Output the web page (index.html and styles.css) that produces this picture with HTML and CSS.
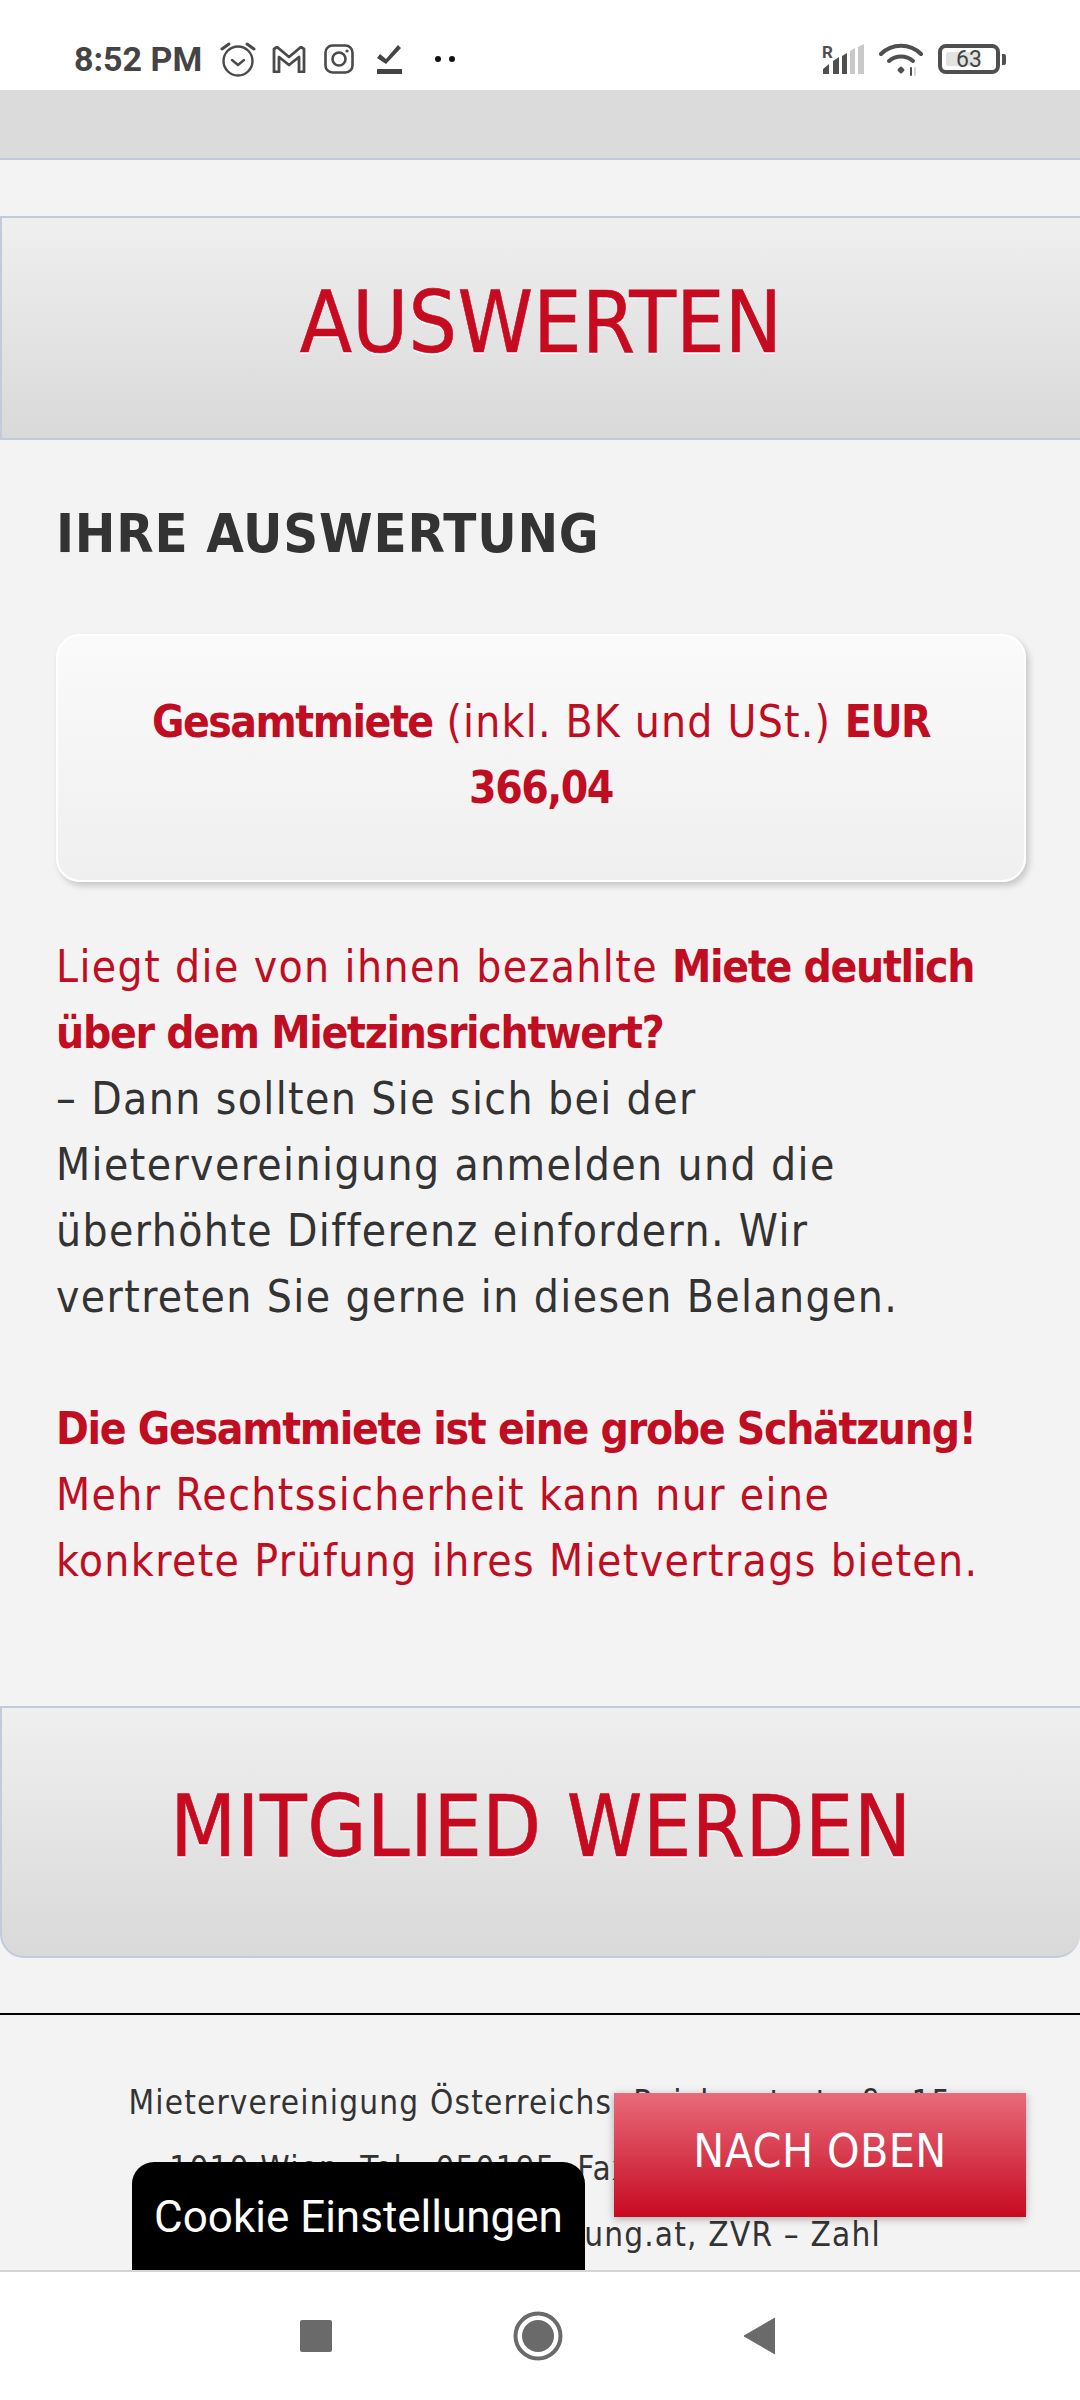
FILE: index.html
```html
<!DOCTYPE html>
<html>

<head>
    <meta charset="UTF-8">
    <title>Mietervereinigung</title>
    <link rel="stylesheet" href="styles.css">
</head>

<body>
    <div class="screen">
        <div class="status">
            <span class="time">8:52 PM</span>
            <svg class="ic-alarm" width="36" height="36" viewBox="0 0 36 36" fill="none" stroke="#4a4a4a" stroke-width="2.4">
                <circle cx="18" cy="20" r="14.5" />
                <path d="M12 19l6 5 6-5" stroke-linecap="round" stroke-linejoin="round" />
                <path d="M2 8l7-5M34 8l-7-5" stroke-width="3" stroke-linecap="round" />
            </svg>
            <svg class="ic-mail" width="34" height="27" viewBox="0 0 34 27" fill="none" stroke="#4a4a4a" stroke-width="2.8" stroke-linejoin="round">
                <path d="M2 3l3-2 12 10L29 1l3 2v23h-5V11L17 19 7 11v15H2z" />
            </svg>
            <svg class="ic-insta" width="30" height="30" viewBox="0 0 30 30" fill="none" stroke="#4a4a4a" stroke-width="2.6">
                <rect x="1.5" y="1.5" width="27" height="27" rx="7" />
                <circle cx="15" cy="15" r="6.5" />
                <circle cx="23" cy="7" r="1.6" fill="#4a4a4a" stroke="none" />
            </svg>
            <svg class="ic-check" width="26" height="30" viewBox="0 0 26 30" fill="#444">
                <path d="M1 14l3-4 6 5L22 1l3 3-15 16z" />
                <rect x="1" y="25" width="25" height="5" />
            </svg>
            <span class="dots"><i></i><i></i></span>
            <span class="status-right">
                <svg width="42" height="30" viewBox="0 0 42 30">
                    <path d="M1 30v-5l6-5v10zM11 30V17l6-4v17zM20 30V12l5-3v21z" fill="#4f4f4f" />
                    <path d="M28 30V7l5-3v26zM36 30V3l6-3v30z" fill="#c9c9c9" />
                    <text x="0" y="14" class="sig-r">R</text>
                </svg>
                <svg class="ic-wifi" width="44" height="33" viewBox="0 0 44 33" fill="none" stroke="#4f4f4f" stroke-width="4" stroke-linecap="round">
                    <path d="M2 11C13 0 31 0 42 11" />
                    <path d="M10 18c7-6 17-6 24 0" />
                    <path d="M20 27l2-2 2 2-2 2z" fill="#4f4f4f" stroke-width="3" stroke-linejoin="round" />
                    <path d="M36 25v7" stroke="#d5d5d5" stroke-width="2" />
                    <path d="M32 25v7" stroke-width="2" />
                </svg>
                <span class="battery">
                    <span class="battery-body"><span class="battery-fill"></span><span class="battery-num">63</span></span>
                    <span class="battery-nub"></span>
                </span>
            </span>
        </div>

        <div class="topbar"></div>

        <div class="page">
            <div class="btn-big btn-first">AUSWERTEN</div>

            <h2 class="title">IHRE AUSWERTUNG</h2>

            <div class="result">
                <b>Gesamtmiete</b> (inkl. BK und USt.) <b>EUR 366,04</b>
            </div>

            <p class="text">
                <span class="red">Liegt die von ihnen bezahlte <b>Miete deutlich über dem Mietzinsrichtwert?</b></span><br>
                – Dann sollten Sie sich bei der Mietervereinigung anmelden und die überhöhte Differenz einfordern. Wir vertreten Sie gerne in diesen Belangen.
            </p>

            <p class="text text-second red">
                <b>Die Gesamtmiete ist eine grobe Schätzung!</b><br>
                Mehr Rechtssicherheit kann nur eine konkrete Prüfung ihres Mietvertrags bieten.
            </p>

            <div class="btn-big btn-second">MITGLIED WERDEN</div>

            <hr class="line">

            <div class="footer">
                Mietervereinigung Österreichs, Reichsratsstraße 15<br>
                1010 Wien, Tel.: 050195, Fax: 050195 – 92000<br>
                kontakt@mietervereinigung.at, ZVR – Zahl
            </div>

            <div class="cookie">Cookie Einstellungen</div>
            <div class="to-top">NACH OBEN</div>
        </div>

        <div class="nav">
            <span class="nav-square"></span>
            <svg width="50" height="50" viewBox="0 0 50 50">
                <circle cx="25" cy="25" r="22.500" fill="none" stroke="#6a6a6a" stroke-width="4" />
                <circle cx="25" cy="25" r="16" fill="#6a6a6a" />
            </svg>
            <svg width="32" height="38" viewBox="0 0 32 38">
                <path d="M32 1v36L1 19z" fill="#6a6a6a" stroke="#6a6a6a" stroke-linejoin="round" />
            </svg>
        </div>
    </div>
</body>

</html>
```

FILE: styles.css
```css
* {
    padding: 0;
    margin: 0;
    box-sizing: border-box;
}

body {
    background: #fff;
    font-family: "DejaVu Sans Condensed", "DejaVu Sans", sans-serif;
}

.screen {
    display: flex;
    flex-direction: column;
    width: 1080px;
    height: 2400px;
    overflow: hidden;
}

/* status bar */
.status {
    display: flex;
    align-items: center;
    flex: none;
    height: 90px;
    padding: 28px 74px 0 74px;
    background: #fff;
}

.time {
    font-family: Roboto, sans-serif;
    font-size: 34px;
    font-weight: 700;
    color: #444;
}

.ic-alarm {
    margin-left: 18px;
}

.ic-mail {
    margin-left: 16px;
}

.ic-insta {
    margin-left: 18px;
}

.ic-check {
    margin-left: 22px;
}

.dots {
    display: flex;
    gap: 8px;
    margin-left: 33px;
}

.dots i {
    width: 6px;
    height: 6px;
    border-radius: 50%;
    background: #111;
}

.status-right {
    display: flex;
    align-items: center;
    gap: 15px;
    margin-left: auto;
}

.sig-r {
    font-family: Roboto, sans-serif;
    font-size: 17px;
    font-weight: 700;
    fill: #4f4f4f;
}

.battery {
    display: flex;
    align-items: center;
    gap: 2px;
}

.battery-body {
    position: relative;
    display: block;
    width: 62px;
    height: 30px;
    border: 4px solid #4f4f4f;
    border-radius: 8px;
}

.battery-fill {
    display: block;
    width: 34px;
    height: 14px;
    margin: 4px 0 0 4px;
    border-radius: 2px;
    background: #e2e2e2;
}

.battery-num {
    position: absolute;
    top: 0;
    left: 0;
    width: 100%;
    font-family: Roboto, sans-serif;
    font-size: 23px;
    line-height: 23px;
    text-align: center;
    color: #444;
}

.battery-nub {
    width: 4px;
    height: 11px;
    border-radius: 0 2px 2px 0;
    background: #4f4f4f;
}

.topbar {
    flex: none;
    height: 70px;
    background: #dbdbdb;
    border-bottom: 2px solid #c3cbdb;
}

/* page */
.page {
    position: relative;
    flex: 1;
    overflow: hidden;
    background: #f3f3f3;
}

.btn-big {
    text-align: center;
    font-size: 85px;
    color: #c60a20;
    text-shadow: 0 2px 0 #fff;
    -webkit-text-stroke: .6px #c60a20;
    background: linear-gradient(#efefef, #d9d9d9);
    border: 2px solid #c3cbdb;
    border-right: 0;
}

.btn-first {
    height: 224px;
    margin-top: 56px;
    line-height: 210px;
    letter-spacing: .3px;
}

.btn-second {
    height: 252px;
    margin-top: 112px;
    line-height: 238px;
    letter-spacing: .6px;
    border-radius: 0 0 24px 24px;
}

.title {
    margin: 61px 56px 0;
    font-size: 54px;
    line-height: 66px;
    font-weight: bold;
    letter-spacing: .8px;
    color: #333;
}

.result {
    margin: 67px 54px 0 56px;
    height: 248px;
    padding: 53px 40px 0;
    text-align: center;
    font-size: 44px;
    line-height: 66px;
    letter-spacing: 1.2px;
    color: #c00d22;
    background: linear-gradient(#fafafa, #efefef);
    border: 2px solid #fff;
    border-radius: 24px;
    box-shadow: 3px 4px 6px rgba(0, 0, 0, .18);
}

.result b {
    letter-spacing: -1.5px;
}

.text {
    width: 940px;
    margin: 52px 56px 0;
    font-size: 44px;
    line-height: 66px;
    letter-spacing: 1.400px;
    color: #333;
}

.text b {
    letter-spacing: -1.3px;
}

.text-second {
    margin-top: 66px;
}

.red {
    color: #c00d22;
}

.line {
    margin-top: 55px;
    border: 0;
    border-top: 2px solid #000;
}

.footer {
    margin-top: 55px;
    text-align: center;
    font-size: 33px;
    line-height: 66px;
    letter-spacing: 1.200px;
    color: #333;
}

/* floating buttons */
.cookie {
    position: absolute;
    left: 132px;
    bottom: 0;
    width: 453px;
    height: 108px;
    padding-top: 30px;
    text-align: center;
    font-family: Roboto, sans-serif;
    font-size: 44px;
    line-height: 50px;
    color: #fff;
    background: #000;
    border-radius: 22px 22px 0 0;
}

.to-top {
    position: absolute;
    left: 614px;
    bottom: 53px;
    width: 412px;
    height: 124px;
    text-align: center;
    font-size: 46px;
    line-height: 116px;
    letter-spacing: .4px;
    color: #fff;
    background: linear-gradient(#e86b7b, #c60a20);
    box-shadow: 0 2px 8px rgba(0, 0, 0, .3);
}

/* nav bar */
.nav {
    display: flex;
    align-items: center;
    flex: none;
    height: 130px;
    padding: 0 305px 0 300px;
    justify-content: space-between;
    background: #fff;
    border-top: 2px solid #d4d4d4;
}

.nav-square {
    width: 32px;
    height: 32px;
    border-radius: 2px;
    background: #6a6a6a;
}
```
